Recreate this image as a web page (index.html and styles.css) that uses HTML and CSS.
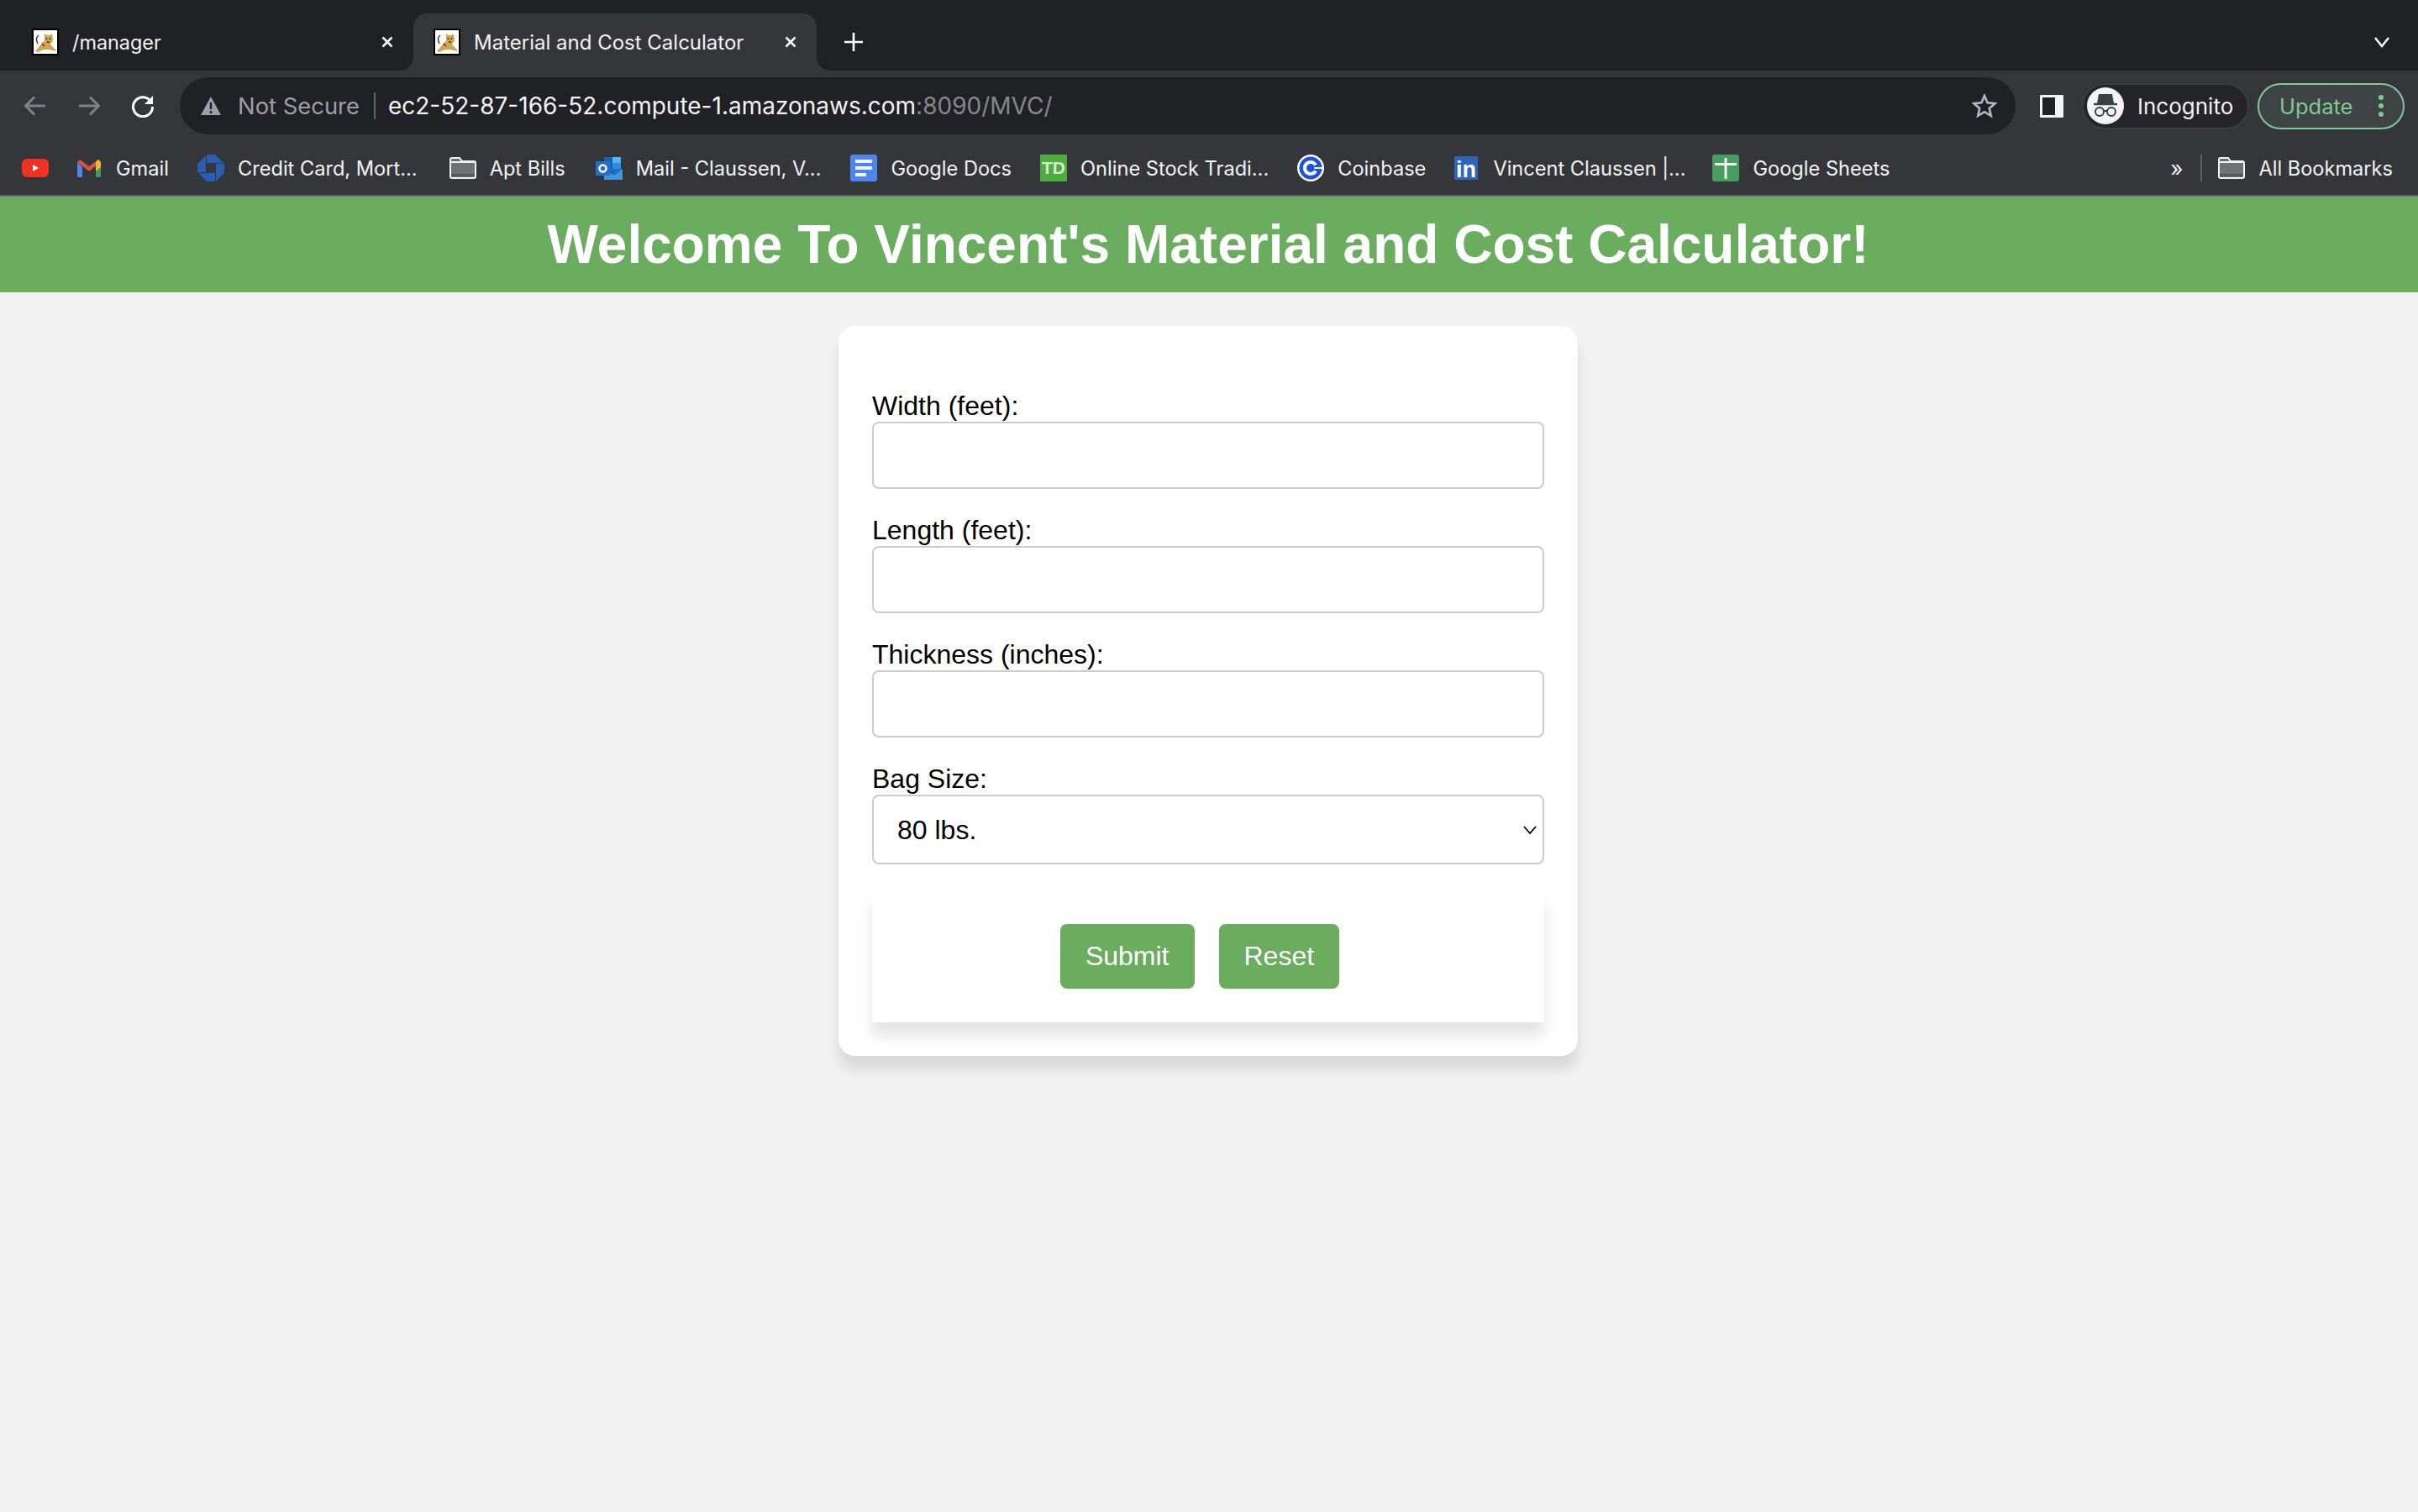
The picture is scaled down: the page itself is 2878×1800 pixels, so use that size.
FILE: index.html
```html
<!DOCTYPE html>
<html lang="en">
<head>
    <meta charset="UTF-8">
    <title>Material and Cost Calculator</title>
    <link rel="stylesheet" href="styles.css">
</head>
<body>

    <svg class="defs" width="0" height="0">
        <symbol id="tomcat" viewBox="0 0 32 32">
            <rect x="1" y="1" width="30" height="30" fill="#fff" stroke="#000" stroke-width="2"/>
            <path d="M15 6l3 2h3l3-2 1 8-3 5 6 6 1 2-9-2h-6l-7 3-3-1 5-6 4-5 2-1z" fill="#d3a552"/>
            <path d="M17 11l1 2M22 11l-1 2M18 16h3M12 18l3 3M8 8c-3 2-3 6-1 10" fill="none" stroke="#333" stroke-width="1.4"/>
        </symbol>
        <symbol id="folder" viewBox="0 0 32 26">
            <path d="M1 3a2 2 0 0 1 2-2h9l3 4h14a2 2 0 0 1 2 2v16a2 2 0 0 1-2 2H3a2 2 0 0 1-2-2z" fill="#6e7073" stroke="#f1f3f4" stroke-width="2"/>
            <path d="M2 6h28" stroke="#f1f3f4" stroke-width="2"/>
            <path d="M2 8h28v12H2z" fill="#707275"/>
            <path d="M2 20h28v3H2z" fill="#55575a"/>
        </symbol>
    </svg>

    <div class="browser">
        <div class="tabstrip">
            <div class="tab">
                <svg class="favicon"><use href="#tomcat"/></svg>
                <span class="tab-title">/manager</span>
                <svg class="tab-close" viewBox="0 0 16 16"><path d="M2.5 2.5l11 11M13.5 2.5l-11 11"/></svg>
            </div>
            <div class="tab tab-active">
                <svg class="favicon"><use href="#tomcat"/></svg>
                <span class="tab-title">Material and Cost Calculator</span>
                <svg class="tab-close" viewBox="0 0 16 16"><path d="M2.5 2.5l11 11M13.5 2.5l-11 11"/></svg>
            </div>
            <svg class="new-tab" viewBox="0 0 24 24"><path d="M12 1v22M1 12h22"/></svg>
            <svg class="tab-list" viewBox="0 0 20 14"><path d="M2 2l8 10 8-10"/></svg>
        </div>

        <div class="toolbar">
            <div class="nav">
                <svg class="nav-icon dim" viewBox="0 0 28 28"><path d="M26 14H3M13 3.500L2.500 14 13 24.500"/></svg>
                <svg class="nav-icon dim" viewBox="0 0 28 28"><path d="M2 14h23M15 3.500L25.500 14 15 24.500"/></svg>
                <svg class="nav-icon" viewBox="0 0 28 28"><path d="M24 9.500A11.500 11.500 0 1 0 25.500 15"/><path class="solid" d="M26 2v10H16z"/></svg>
            </div>
            <div class="omnibox">
                <svg class="warn" viewBox="0 0 26 24"><path d="M13 1l12 22H1z" fill="#9aa0a6"/><path d="M13 8v8M13 18v3" stroke="#202124" stroke-width="2.400"/></svg>
                <span class="not-secure">Not Secure</span>
                <span class="omni-sep"></span>
                <span class="url">ec2-52-87-166-52.compute-1.amazonaws.com<span class="url-port">:8090/MVC/</span></span>
                <svg class="star" viewBox="0 0 30 30"><path d="M15 3l3.600 8.300 9 .8-6.800 5.900 2 8.800-7.800-4.600-7.800 4.600 2-8.800L2.400 12.100l9-.8z"/></svg>
            </div>
            <div class="side-panel"><span></span></div>
            <div class="incognito">
                <svg class="incognito-icon" viewBox="0 0 44 44">
                    <circle cx="22" cy="22" r="22" fill="#f1f3f4"/>
                    <path d="M14 8h16l2 11H12z" fill="#3c4043"/>
                    <path d="M8 20h28" stroke="#3c4043" stroke-width="2.400"/>
                    <circle cx="15" cy="29" r="5" fill="none" stroke="#3c4043" stroke-width="2"/>
                    <circle cx="29" cy="29" r="5" fill="none" stroke="#3c4043" stroke-width="2"/>
                    <path d="M20 28h4" stroke="#3c4043" stroke-width="2"/>
                </svg>
                <span>Incognito</span>
            </div>
            <div class="update">
                <span>Update</span>
                <svg class="dots" viewBox="0 0 8 28"><circle cx="4" cy="4" r="3"/><circle cx="4" cy="14" r="3"/><circle cx="4" cy="24" r="3"/></svg>
            </div>
        </div>

        <div class="bookmarks">
            <div class="bm bm-first">
                <svg class="bm-icon" viewBox="0 0 32 24"><rect y="1" width="32" height="22" rx="6" fill="#ee3224"/><path d="M13 8l7 4-7 4z" fill="#fff"/></svg>
            </div>
            <div class="bm">
                <svg class="bm-icon" viewBox="0 0 32 24">
                    <path d="M2 5v17a1 1 0 0 0 1 1h5V11z" fill="#4f86ec"/>
                    <path d="M30 5v17a1 1 0 0 1-1 1h-5V11z" fill="#3f9b57"/>
                    <path d="M2 5l14 11 14-11-3-3-11 8L5 2z" fill="#dc5144"/>
                    <path d="M24 5l3-3 3 3v6l-6 5z" fill="#f2b92b"/>
                </svg>
                <span>Gmail</span>
            </div>
            <div class="bm">
                <svg class="bm-icon" viewBox="0 0 32 32" fill="#2a5db0">
                    <path d="M11 0h10l10 10H11zM32 11v11L22 32V11zM21 32H11L1 22h20zM0 21V11L10 1v20z"/>
                </svg>
                <span>Credit Card, Mort...</span>
            </div>
            <div class="bm bm-apt">
                <svg class="bm-icon"><use href="#folder"/></svg>
                <span>Apt Bills</span>
            </div>
            <div class="bm bm-mail">
                <svg class="bm-icon" viewBox="0 0 32 32">
                    <path d="M10 3h16v14H10z" fill="#1b5fb5"/>
                    <path d="M20 3h10v7H20z" fill="#50b6ee"/>
                    <path d="M20 10h10v7H20z" fill="#2f8fdf"/>
                    <path d="M10 17l11 7 11-7v13H10z" fill="#3f97e0"/>
                    <path d="M14 17h18l-10 8z" fill="#1c70c6"/>
                    <rect y="8" width="17" height="17" rx="1" fill="#2670c4"/>
                    <circle cx="8.500" cy="16.500" r="4" fill="none" stroke="#fff" stroke-width="2.400"/>
                </svg>
                <span>Mail - Claussen, V...</span>
            </div>
            <div class="bm bm-docs">
                <svg class="bm-icon" viewBox="0 0 32 32">
                    <rect width="32" height="32" rx="3" fill="#4f86ec"/>
                    <path d="M6 6h20v4H6zM6 14h20v4H6zM6 22h13v4H6z" fill="#f1f3f4"/>
                </svg>
                <span>Google Docs</span>
            </div>
            <div class="bm">
                <svg class="bm-icon" viewBox="0 0 32 32">
                    <rect width="32" height="32" fill="#4ead3f"/>
                    <text class="td-text" x="16" y="23">TD</text>
                </svg>
                <span>Online Stock Tradi...</span>
            </div>
            <div class="bm">
                <svg class="bm-icon" viewBox="0 0 32 32">
                    <circle cx="16" cy="16" r="16" fill="#fff"/>
                    <circle cx="16" cy="16" r="13.500" fill="#1d50e8"/>
                    <path d="M22 12.500a7 7 0 1 0 0 7" fill="none" stroke="#fff" stroke-width="4"/>
                    <path d="M20 16h10" stroke="#fff" stroke-width="2"/>
                </svg>
                <span>Coinbase</span>
            </div>
            <div class="bm bm-tight">
                <svg class="bm-icon" viewBox="0 0 32 32">
                    <rect x="2" y="2" width="28" height="28" rx="1" fill="#2d64bc"/>
                    <text class="in-text" x="16" y="27">in</text>
                </svg>
                <span>Vincent Claussen |...</span>
            </div>
            <div class="bm bm-tight">
                <svg class="bm-icon" viewBox="0 0 32 32">
                    <rect width="32" height="32" rx="3" fill="#459d5e"/>
                    <path d="M14.500 4h3v25h-3zM3 10h26v3H3z" fill="#f1f3f4"/>
                </svg>
                <span>Google Sheets</span>
            </div>
            <div class="bm-right">
                <span class="more">»</span>
                <span class="bm-sep"></span>
                <div class="bm">
                    <svg class="bm-icon"><use href="#folder"/></svg>
                    <span>All Bookmarks</span>
                </div>
            </div>
        </div>
    </div>

    <div class="header">
        <h1>Welcome To Vincent's Material and Cost Calculator!</h1>
    </div>

    <form class="calc-form">
        <label for="width">Width (feet):</label>
        <input type="text" id="width" name="width">

        <label for="length">Length (feet):</label>
        <input type="text" id="length" name="length">

        <label for="thickness">Thickness (inches):</label>
        <input type="text" id="thickness" name="thickness">

        <label for="bag">Bag Size:</label>
        <div class="select-wrap">
            <select id="bag" name="bag">
                <option>80 lbs.</option>
                <option>60 lbs.</option>
                <option>40 lbs.</option>
            </select>
            <svg class="select-arrow" viewBox="0 0 16 10"><path d="M1 1l7 8 7-8"/></svg>
        </div>

        <div class="actions">
            <button type="submit">Submit</button>
            <button type="reset">Reset</button>
        </div>
    </form>

</body>
</html>
```

FILE: styles.css
```css
* {
    box-sizing: border-box;
}

body {
    margin: 0;
    height: 1800px;
    overflow: hidden;
    background-color: #f2f2f2;
    font-family: 'Liberation Sans', Arial, sans-serif;
}

.defs {
    display: block;
    height: 0;
}

/* barra del navegador */
.browser {
    font-family: 'Inter', 'Roboto', sans-serif;
    background-color: #35363a;
    color: #f1f3f4;
    border-bottom: 2px solid #5f6368;
}

.tabstrip {
    display: flex;
    align-items: flex-end;
    height: 84px;
    background-color: #202124;
}

.tab {
    display: flex;
    align-items: center;
    width: 480px;
    height: 68px;
    padding: 0 23px 0 24px;
    position: relative;
}

.tab:first-child {
    width: 492px;
    padding-left: 38px;
}

.tab:first-child .tab-title {
    font-size: 23.4px;
}

.tab-active {
    background-color: #35363a;
    border-radius: 16px 16px 0 0;
}

.tab-active:before,
.tab-active:after {
    content: "";
    position: absolute;
    bottom: 0;
    width: 16px;
    height: 16px;
}

.tab-active:before {
    left: -16px;
    background: radial-gradient(circle at 0 0, #202124 15.5px, #35363a 16.5px);
}

.tab-active:after {
    right: -16px;
    background: radial-gradient(circle at 100% 0, #202124 15.5px, #35363a 16.5px);
}

.favicon {
    width: 32px;
    height: 32px;
    flex-shrink: 0;
}

.tab-title {
    margin-left: 16px;
    font-size: 24px;
}

.tab-close {
    width: 16px;
    height: 16px;
    margin-left: auto;
    fill: none;
    stroke: #fff;
    stroke-width: 2.5;
}

.new-tab {
    width: 24px;
    height: 24px;
    margin: 0 0 22px 32px;
    fill: none;
    stroke: #fff;
    stroke-width: 2.6;
}

.tab-list {
    width: 20px;
    height: 14px;
    margin: 0 33px 27px auto;
    fill: none;
    stroke: #fff;
    stroke-width: 2.4;
}

.toolbar {
    display: flex;
    align-items: center;
    height: 84px;
    padding-left: 10px;
}

.nav {
    display: flex;
    width: 192px;
    margin-right: 12px;
}

.nav-icon {
    width: 28px;
    height: 28px;
    margin: 0 18px;
    fill: none;
    stroke: #fff;
    stroke-width: 3;
}

.nav-icon.dim {
    stroke: #7f8185;
}

.nav-icon .solid {
    fill: #fff;
    stroke: none;
}

.omnibox {
    display: flex;
    align-items: center;
    width: 2185px;
    height: 68px;
    padding: 0 22px 0 24px;
    background-color: #202124;
    border-radius: 34px;
    font-size: 28px;
}

.warn {
    width: 26px;
    height: 24px;
    flex-shrink: 0;
}

.not-secure {
    margin-left: 19px;
    font-size: 27.4px;
    color: #9aa0a6;
}

.omni-sep {
    width: 2px;
    height: 32px;
    margin: 0 15px 0 17px;
    background-color: #5f6368;
}

.url {
    color: #f1f3f4;
}

.url-port {
    color: #85888c;
}

.star {
    width: 30px;
    height: 30px;
    margin-left: auto;
    fill: none;
    stroke: #b5b8bc;
    stroke-width: 2.6;
}

.side-panel {
    display: flex;
    justify-content: flex-end;
    width: 28px;
    height: 27px;
    margin: 0 22px 0 29px;
    background-color: #202124;
    border: 3px solid #f1f3f4;
    border-right-width: 10px;
    border-radius: 1px;
}

.incognito {
    display: flex;
    align-items: center;
    width: 199px;
    height: 55px;
    padding-left: 4px;
    background-color: #252428;
    border: 2px solid #3c3d41;
    border-radius: 28px;
    font-size: 26px;
}

.incognito-icon {
    width: 44px;
    height: 44px;
    margin-right: 16px;
    flex-shrink: 0;
}

.update {
    display: flex;
    align-items: center;
    justify-content: space-between;
    width: 175px;
    height: 55px;
    margin-left: 10px;
    padding: 0 22px 0 24px;
    color: #81c995;
    background-color: #3d4443;
    border: 2px solid #81c995;
    border-radius: 28px;
    font-size: 25.5px;
}

.dots {
    width: 8px;
    height: 28px;
    fill: #81c995;
}

.bookmarks {
    display: flex;
    align-items: center;
    gap: 34px;
    height: 64px;
    padding: 0 30px 0 26px;
    font-size: 23.6px;
}

.bm {
    display: flex;
    align-items: center;
    gap: 16px;
}

.bm-first {
    margin-right: -2px;
}

.bm-apt {
    margin-left: 4px;
}

.bm-mail {
    margin-left: 2px;
}

.bm-docs {
    margin-left: 1px;
}

.bm-tight {
    margin-left: -2px;
}

.bm-icon {
    width: 32px;
    height: 32px;
    flex-shrink: 0;
}

.td-text {
    font-family: 'Liberation Sans', sans-serif;
    font-size: 21px;
    font-weight: bold;
    fill: #d5ecc9;
    text-anchor: middle;
}

.in-text {
    font-family: 'Liberation Sans', sans-serif;
    font-size: 27px;
    font-weight: bold;
    fill: #fff;
    text-anchor: middle;
}

.bm-right {
    display: flex;
    align-items: center;
    margin-left: auto;
}

.more {
    font-size: 26px;
}

.bm-sep {
    width: 2px;
    height: 32px;
    margin: 0 19px 0 21px;
    background-color: #5f6368;
}

/* pagina */
.header {
    padding: 20px 22px 20px 20px;
    background-color: #6aad5e;
    color: #fff;
    text-align: center;
}

.header h1 {
    margin: 0;
    font-size: 64px;
}

.calc-form {
    width: 880px;
    margin: 40px 0 0 998px;
    padding: 77px 40px 40px;
    background-color: #fff;
    border-radius: 20px;
    box-shadow: 0 16px 16px rgba(0, 0, 0, 0.11);
}

label {
    display: block;
    font-size: 32px;
    color: #000;
}

input,
select {
    display: block;
    width: 100%;
    border: 2px solid #ccc;
    border-radius: 8px;
    background-color: #fff;
    font-family: inherit;
    font-size: 32px;
    color: #000;
}

input {
    height: 80px;
    margin-bottom: 31px;
}

select {
    height: 83px;
    padding: 0 28px;
    appearance: none;
}

.select-wrap {
    position: relative;
    margin-bottom: 31px;
}

.select-arrow {
    position: absolute;
    top: 37px;
    right: 9px;
    width: 16px;
    height: 10px;
    fill: none;
    stroke: #000;
    stroke-width: 1.8;
}

.actions {
    display: flex;
    justify-content: center;
    gap: 9px;
    padding: 40px;
    box-shadow: 0 16px 16px rgba(0, 0, 0, 0.11);
}

button {
    height: 77px;
    margin-right: 20px;
    padding: 0 30px;
    background-color: #6aad5e;
    color: #fff;
    border: none;
    border-radius: 8px;
    font-family: inherit;
    font-size: 32px;
}
```
